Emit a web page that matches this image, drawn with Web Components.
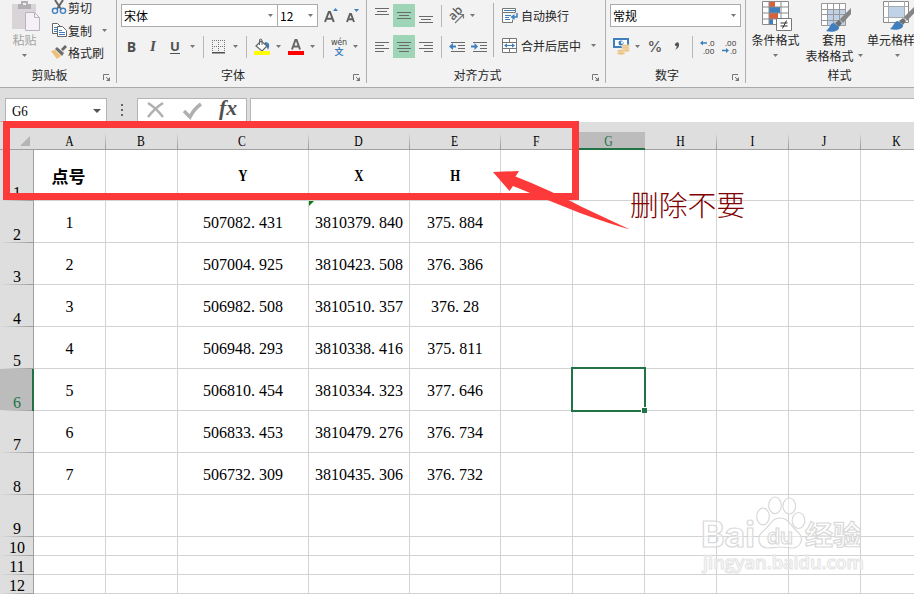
<!DOCTYPE html>
<html lang="zh-CN">
<head>
<meta charset="UTF-8">
<title>G6</title>
<style>
  body {
    margin: 0;
    width: 914px;
    height: 594px;
    overflow: hidden;
    position: relative;
    background: #fff;
    color: #262626;
    font: 12px/16px "Noto Sans CJK SC", sans-serif;
  }
  .ribbon {
    display: flex;
    height: 87px;
    background: #f2f2f2;
    border-bottom: 1px solid #a9a9a9;
    overflow: hidden;
  }
  .side { display: flex; }
  .spacer { width: 1px; height: 54px; margin: 3px 4px 0 3px; background: #b0b0b0; }
  .bold { font: bold 14px "Open Sans", sans-serif; color: #505050; }
  .italic { font: italic bold 15px "Liberation Serif", serif; color: #505050; }
  .under { font: bold 13px/13px "Open Sans", sans-serif; color: #505050; border-bottom: 1px solid #505050; }
  .percent { font: 500 15px "Inter", sans-serif; color: #555; }
</style>
</head>
<body>
  <div class="ribbon">
    <ribbon-group label="剪贴板" style="--w: 117px">
      <div class="side">
        <big-button icon="paste" style="--w: 49px; --c: #a3a3a3; --x: 3px">粘贴</big-button>
        <div>
          <ribbon-row style="--cols: 19px 24px; --h: 15px; --top: 0px"><ui-icon name="cut"></ui-icon><span>剪切</span></ribbon-row>
          <ribbon-row style="--cols: 19px 24px 25px; --h: 23px; --top: 4px"><ui-icon name="copy"></ui-icon><span>复制</span><ui-icon name="down"></ui-icon></ribbon-row>
          <ribbon-row style="--cols: 19px 36px; --h: 23px; --top: -1px"><ui-icon name="brush"></ui-icon><span>格式刷</span></ribbon-row>
        </div>
      </div>
    </ribbon-group>

    <ribbon-group label="字体" style="--w: 250px">
      <ribbon-row style="--cols: 157px 40px 26px 18px; --pad: 4px">
        <combo-box>宋体</combo-box><combo-box style="--bl: 0">12</combo-box>
        <ui-icon name="grow"></ui-icon><ui-icon name="shrink"></ui-icon>
      </ribbon-row>
      <ribbon-row style="--cols: 21px 22px 22px 13px 8px 23px 10px 12px 20px 12px 24px 9px 12px 22px 9px; --pad: 4px; --top: 8px">
        <span class="bold">B</span><span class="italic">I</span><span class="under">U</span><ui-icon name="down"></ui-icon>
        <ui-icon name="sep"></ui-icon>
        <ui-icon name="borders"></ui-icon><ui-icon name="down"></ui-icon>
        <ui-icon name="sep"></ui-icon>
        <ui-icon name="bucket"></ui-icon><ui-icon name="down"></ui-icon>
        <ui-icon name="color"></ui-icon><ui-icon name="down"></ui-icon>
        <ui-icon name="sep"></ui-icon>
        <ui-icon name="wen"></ui-icon><ui-icon name="down"></ui-icon>
      </ribbon-row>
    </ribbon-group>

    <ribbon-group label="对齐方式" style="--w: 239px">
      <div class="side">
        <div style="width: 123px">
          <ribbon-row style="--cols: 22px 22px 22px 8px 23px 8px; --pad: 4px">
            <ui-icon name="vtop"></ui-icon><ui-icon name="vmid" on></ui-icon><ui-icon name="vbot"></ui-icon>
            <ui-icon name="sep"></ui-icon>
            <ui-icon name="angle"></ui-icon><ui-icon name="down"></ui-icon>
          </ribbon-row>
          <ribbon-row style="--cols: 22px 22px 22px 8px 23px 22px; --pad: 4px; --top: 8px">
            <ui-icon name="left"></ui-icon><ui-icon name="center" on></ui-icon><ui-icon name="right"></ui-icon>
            <ui-icon name="sep"></ui-icon>
            <ui-icon name="outdent"></ui-icon><ui-icon name="indent"></ui-icon>
          </ribbon-row>
        </div>
        <div class="spacer"></div>
        <div>
          <ribbon-row style="--cols: 23px 48px"><ui-icon name="wrap"></ui-icon><span>自动换行</span></ribbon-row>
          <ribbon-row style="--cols: 23px 60px 24px; --top: 7px"><ui-icon name="merge"></ui-icon><span>合并后居中</span><ui-icon name="down"></ui-icon></ribbon-row>
        </div>
      </div>
    </ribbon-group>

    <ribbon-group label="数字" style="--w: 140px">
      <ribbon-row style="--cols: 131px; --pad: 4px"><combo-box>常规</combo-box></ribbon-row>
      <ribbon-row style="--cols: 22px 11px 24px 20px 10px 21px 24px; --pad: 4px; --top: 8px">
        <ui-icon name="money"></ui-icon><ui-icon name="down"></ui-icon>
        <span class="percent">%</span><ui-icon name="comma"></ui-icon>
        <ui-icon name="sep"></ui-icon>
        <ui-icon name="more"></ui-icon><ui-icon name="less"></ui-icon>
      </ribbon-row>
    </ribbon-group>

    <ribbon-group label="样式" last style="--w: 188px">
      <div class="side">
        <big-button icon="cond" style="--w: 59px; --x: 2px">条件格式</big-button>
        <big-button icon="table" second="表格格式" style="--w: 58px">套用</big-button>
        <big-button icon="cell" style="--w: 68px">单元格样式</big-button>
      </div>
    </ribbon-group>
  </div>

  <formula-bar>G6</formula-bar>
  <sheet-grid></sheet-grid>
  <site-mark></site-mark>
  <red-note>删除不要</red-note>

<script>
const A = '#6a6a6a';
const BLUE = '#3f7fbd';

// lines(): horizontal strokes used by every alignment icon
const lines = (list) => list.map(([x, y, w]) => `<rect x="${x}" y="${y}" width="${w}" height="1"/>`).join('');

const brushHead = `
  <path d="M31 5 20 16l3 4 8-9z" fill="#858585"/>
  <path d="m19 17-4 3 4 4 3-4z" fill="#707070"/>
  <path d="M14 20c-4 0-4 5-8 8 6 2 14 0 13-4z" fill="${BLUE}"/>`;

const ICONS = {
  down: [5, 3, `<path d="M0 0h5L2.500 3z" fill="#777"/>`],
  sep: [1, 22, `<path d="M0 0h1v22H0z" fill="#b8b8b8"/>`],
  launch: [8, 8, `<path d="M.5 6V.5H6M3 3l3 3" fill="none" stroke="#777"/><path d="M7 3v4H3z" fill="#777"/>`],
  paste: [30, 34, `<path d="M1 4h24v25H1z" fill="#d8d4d8"/><path d="M7 4h3V1h7v3h3v5H7z" fill="#b1afb1"/><path d="M12 3h3v2h-3z" fill="#eee"/><path d="M14.500 12.500h9l5 5v13h-14z" fill="#f5f0f7" stroke="#b9b3bb"/><path d="M23.500 12.500v5h5" fill="none" stroke="#b9b3bb"/>`],
  cut: [16, 16, `<path d="m4 0 6 9M12 0 6 9" stroke="#666" stroke-width="2" fill="none"/><circle cx="4" cy="10.800" r="2.600" fill="none" stroke="${BLUE}" stroke-width="1.400"/><circle cx="12" cy="10.800" r="2.600" fill="none" stroke="${BLUE}" stroke-width="1.400"/>`],
  copy: [16, 15, `<path d="M1.500.5h5l3 3v7h-8z" fill="#fff" stroke="#666"/><path d="M3 4.500h3M3 6.500h3M3 8.500h3" stroke="${BLUE}"/><path d="M6.500 3.500h5l4 4v6h-9z" fill="#fff" stroke="#666"/><path d="M8 7.500h3M8 9.500h6M8 11.500h6" stroke="${BLUE}"/>`],
  brush: [16, 15, `<path d="m14 0 2 2-4 4-2-2z" fill="#666"/><path d="m6 2 7 6-2 3-7-7z" fill="#6d6d6d"/><path d="M4 5 0 6l6 8 4-3z" fill="#eebf76"/>`],
  grow: [14, 15, `<path d="M1 14 4.800 4h1.200L9.800 14M2.500 10.800h6" fill="none" stroke="#606060" stroke-width="2"/><path d="m9 3 2.500-3L14 3z" fill="${BLUE}"/>`],
  shrink: [14, 15, `<path d="M1 14 4 6h1l3 8M2 11.300h5" fill="none" stroke="#606060" stroke-width="1.900"/><path d="M8 1h5l-2.500 3z" fill="${BLUE}"/>`],
  borders: [13, 14, `<path d="M.5 0v13M6.500 0v13M12.500 0v13M0 .5h13M0 6.500h13" stroke="#777" stroke-dasharray="1 1" fill="none"/><path d="M0 12h13v1.500H0z" fill="#505050"/>`],
  bucket: [17, 17, `<path d="M11 4c5 0 5 4 3 8-1-3-2-4-4-5z" fill="${BLUE}"/><path d="m7 3 6 5-5 5-6-5z" fill="#fff" stroke="#666" stroke-width="1.200"/><path d="M5.500 7V1.500Q7 0 8 2v5" fill="none" stroke="#666"/><path d="M0 13h16v4H0z" fill="#ff0"/>`],
  color: [16, 16, `<path d="M4 10.500 7.400 1h1.200L12 10.500M5.200 7.500h5.600" fill="none" stroke="#666" stroke-width="2"/><path d="M0 12h16v4H0z" fill="red"/>`],
  wen: [18, 18, `<text x="0" y="7" font-family="DejaVu Sans" font-size="8" textLength="16" fill="#444">wén</text><text x="3.500" y="17" font-size="9" font-weight="bold" font-family="Noto Sans CJK SC" fill="${BLUE}">文</text>`],
  vtop: [14, 22, `<g fill="${A}">${lines([[0, 3, 14], [2, 6, 10], [0, 9, 14]])}</g>`],
  vmid: [14, 22, `<g fill="${A}">${lines([[0, 7, 14], [2, 10, 10], [0, 13, 14]])}</g>`],
  vbot: [14, 22, `<g fill="${A}">${lines([[0, 11, 14], [2, 14, 10], [0, 17, 14]])}</g>`],
  left: [14, 12, `<g fill="${A}">${lines([[0, 1, 14], [0, 4, 9], [0, 7, 14], [0, 10, 9]])}</g>`],
  center: [14, 12, `<g fill="${A}">${lines([[0, 1, 14], [2, 4, 10], [0, 7, 14], [2, 10, 10]])}</g>`],
  right: [14, 12, `<g fill="${A}">${lines([[0, 1, 14], [5, 4, 9], [0, 7, 14], [5, 10, 9]])}</g>`],
  angle: [17, 16, `<text transform="translate(5 13) rotate(-45)" font-family="Open Sans" font-weight="600" font-size="12" fill="#606060">ab</text><path d="m7 15 8-8M11.500 6.500h4v4" fill="none" stroke="#777" stroke-width="1.200"/>`],
  outdent: [16, 12, `<g fill="${A}">${lines([[2, 1, 14], [9, 4, 7], [9, 7, 7], [2, 10, 14]])}</g><path d="M0 5.500 4 2v2.500h3v2H4V9z" fill="${BLUE}"/>`],
  indent: [16, 12, `<g fill="${A}">${lines([[2, 1, 14], [9, 4, 7], [9, 7, 7], [2, 10, 14]])}</g><path d="M7 5.500 3.500 2v2.500H0v2h3.500V9z" fill="${BLUE}"/>`],
  wrap: [15, 16, `<path d="M.5.5h13v4H.5zM.5 4.500v10h10v-3" fill="#fff" stroke="#777"/><path d="M2 2.500h12M3 7.500h6M3 9.500h4M3 11.500h5" stroke="${BLUE}"/><path d="M15 5v4h-4" fill="none" stroke="${BLUE}" stroke-width="1.500"/><path d="m8.500 9 4-3v6z" fill="${BLUE}"/>`],
  merge: [15, 15, `<path d="M.5.5h14v14H.5zM.5 4.500h14M.5 10.500h14M7.500.5v4M7.500 10.500v4" fill="#fff" stroke="#777"/><path d="M3 7.500h9" stroke="${BLUE}"/><path d="m2 7.500 3-2.300v4.600zM13 7.500l-3-2.300v4.600z" fill="${BLUE}"/>`],
  money: [17, 17, `<path d="M1 1h14v8H1z" fill="#fff" stroke="${BLUE}" stroke-width="2"/><circle cx="8" cy="5" r="2.500" fill="${BLUE}"/><path d="M8 3.500h2v2H8z" fill="#fff"/><g fill="#ecc27d" stroke="#f2f2f2" stroke-width=".5"><ellipse cx="12.500" cy="8" rx="4" ry="1.600"/><ellipse cx="12.500" cy="10.300" rx="4" ry="1.600"/><ellipse cx="12.500" cy="12.400" rx="4" ry="1.600"/><ellipse cx="8" cy="13" rx="4" ry="1.600"/><ellipse cx="8" cy="15.300" rx="4" ry="1.600"/></g>`],
  comma: [6, 9, `<path d="M1 2Q3-1 5 1.500C5.500 5 3.500 7 1 7.500 2.500 6 3 5 2.500 4 1 4 .5 3 1 2z" fill="#555"/>`],
  more: [16, 16, `<text x="8" y="6.500" font-family="Open Sans" font-size="8" fill="#333">.0</text><text x="3" y="14.500" font-family="Open Sans" font-size="8" fill="#333">.00</text><path d="m0 4 3-2.500V3.300h4v1.400H3V6.500z" fill="${BLUE}"/>`],
  less: [16, 16, `<text x="3" y="6.500" font-family="Open Sans" font-size="8" fill="#333">.00</text><text x="8" y="14.500" font-family="Open Sans" font-size="8" fill="#333">.0</text><path d="M7 11.500 4 9v1.800H0v1.400h4V14z" fill="${BLUE}"/>`],
  cond: [31, 31, `<path d="M1 1h27v24H1z" fill="#fff"/><path d="M8 1h6v6H8zM8 13h9v6H8z" fill="#d9603b"/><path d="M8 7h11v6H8zM8 19h4v6H8z" fill="${BLUE}"/><path d="M1.500 1.500h26v23h-26zM8 1v24M20 1v24M1 7h27M1 13h27M1 19h27" fill="none" stroke="#8a8a8a"/><path d="M15.500 18.500h15v12h-15z" fill="#fff" stroke="#777"/><path d="M19.500 23h7M19.500 26h7M25.500 20.500l-4 8" stroke="#333"/>`],
  table: [31, 31, `<path d="M2.500 3.500h24v22h-24z" fill="#fff"/><path d="M9 9h18v17H9z" fill="#bfd2e8"/><path d="M2.500 3.500h24v22h-24zM8.500 3v22M14.500 3v22M20.500 3v22M2 9.500h24M2 14.500h24M2 20.500h24" fill="none" stroke="#999"/><g transform="translate(1 3)">${brushHead}</g>`],
  cell: [31, 31, `<path d="M1.500 1.500h25v21h-25z" fill="#fff" stroke="#8a8a8a"/><path d="M6.500 1v21M22.500 1v21M1 6.500h25M1 17.500h25" stroke="#aaa"/><path d="M7 7h15v10H7z" fill="#bfd2e8"/><g transform="translate(2 1)">${brushHead}</g>`],
};

class UiIcon extends HTMLElement {
  connectedCallback() {
    const [w, h, body] = ICONS[this.getAttribute('name')];
    this.attachShadow({ mode: 'open' }).innerHTML = `
      <style>
        :host { display: flex; align-items: center; justify-content: center; }
        :host([on]) { background: #9fd5b7; align-self: stretch; justify-self: stretch; }
        svg { display: block; flex: none; overflow: visible; }
      </style>
      <svg width="${w}" height="${h}" viewBox="0 0 ${w} ${h}">${body}</svg>`;
  }
}
customElements.define('ui-icon', UiIcon);

class RibbonGroup extends HTMLElement {
  connectedCallback() {
    const last = this.hasAttribute('last');
    this.attachShadow({ mode: 'open' }).innerHTML = `
      <style>
        :host { display: flex; flex-direction: column; flex: none; box-sizing: border-box; width: var(--w); height: 83px; border-right: 1px solid #b0b0b0; }
        .tools { height: 68px; }
        .label { display: grid; grid-template-columns: 1fr 14px; padding-right: 3px; text-align: center; line-height: 17px; }
        .label.last { grid-template-columns: 1fr; padding-right: 0; }
        ui-icon { align-self: end; padding: 0 0 1px 2px; }
      </style>
      <div class="tools"><slot></slot></div>
      <div class="label${last ? ' last' : ''}"><span>${this.getAttribute('label')}</span>${last ? '' : '<ui-icon name="launch"></ui-icon>'}</div>`;
  }
}
customElements.define('ribbon-group', RibbonGroup);

class RibbonRow extends HTMLElement {
  constructor() {
    super();
    this.attachShadow({ mode: 'open' }).innerHTML = `
      <style>
        :host {
          display: grid;
          grid-template-columns: var(--cols);
          grid-template-rows: var(--h, 23px);
          place-items: center;
          padding-left: var(--pad, 0);
          margin-top: var(--top, 4px);
          white-space: nowrap;
        }
      </style>
      <slot></slot>`;
  }
}
customElements.define('ribbon-row', RibbonRow);

class ComboBox extends HTMLElement {
  constructor() {
    super();
    this.attachShadow({ mode: 'open' }).innerHTML = `
      <style>
        :host { display: flex; justify-self: stretch; align-self: stretch; align-items: center; justify-content: space-between; padding: 0 4px 0 2px; background: #fff; border: 1px solid #ababab; border-left-width: var(--bl, 1px); color: #000; }
      </style>
      <slot></slot><ui-icon name="down"></ui-icon>`;
  }
}
customElements.define('combo-box', ComboBox);

class BigButton extends HTMLElement {
  connectedCallback() {
    const second = this.getAttribute('second') || '';
    this.attachShadow({ mode: 'open' }).innerHTML = `
      <style>
        :host { display: flex; flex-direction: column; align-items: center; flex: none; width: var(--w); color: var(--c, inherit); white-space: nowrap; }
        .pic { height: 32px; align-items: flex-start; margin-left: var(--x, 0); }
        .second { display: flex; gap: 4px; height: 15px; line-height: 15px; }
      </style>
      <ui-icon class="pic" name="${this.getAttribute('icon')}"></ui-icon>
      <slot></slot>
      <div class="second">${second}<ui-icon name="down"></ui-icon></div>`;
  }
}
customElements.define('big-button', BigButton);

class FormulaBar extends HTMLElement {
  constructor() {
    super();
    this.attachShadow({ mode: 'open' }).innerHTML = `
      <style>
        :host { display: grid; grid-template-columns: 102px 30px 110px 1fr; box-sizing: border-box; height: 34px; padding: 10px 0 0 5px; background: #dedede; border-bottom: 1px solid #b5b5b5; }
        .box { background: #fff; border: 1px solid #b5b5b5; border-bottom: 0; display: flex; align-items: center; }
        .name { justify-content: space-between; padding: 0 5px 0 6px; color: #000; font: 14px "Liberation Serif", serif; }
        .name span { transform: scaleX(.92); transform-origin: left; padding-top: 3px; }
        .dots { display: grid; place-content: center; gap: 3px; }
        .dots i { width: 2px; height: 2px; background: #666; }
        .input { margin-left: 3px; border-right: 0; }
        svg { overflow: visible; }
      </style>
      <div class="box name"><span><slot></slot></span><svg width="8" height="4"><path d="M0 0h8L4 4z" fill="#555"/></svg></div>
      <div class="dots"><i></i><i></i><i></i></div>
      <div class="box">
        <svg width="108" height="23">
          <path d="M10 4q8 5 15 14M25 4q-8 5-15 14" fill="none" stroke="#b0b0b0" stroke-width="2.600"/>
          <path d="m46 12 6 6Q56 10 63 5" fill="none" stroke="#b0b0b0" stroke-width="3.500"/>
          <text x="81" y="16" font-family="Liberation Serif" font-style="italic" font-weight="bold" font-size="20" fill="#505050" textLength="18" lengthAdjust="spacingAndGlyphs">fx</text>
        </svg>
      </div>
      <div class="box input"></div>`;
  }
}
customElements.define('formula-bar', FormulaBar);

const COLS = { A: 72, B: 72, C: 131, D: 101, E: 91, F: 72, G: 72, H: 72, I: 72, J: 72, K: 72 };
const ROWS = [51, 42, 42, 42, 42, 42, 42, 42, 42, 19, 19, 19];
const DATA = [
  ['点号', '', 'Y', 'X', 'H'],
  ['1', '', '507082.431', '3810379.840', '375.884'],
  ['2', '', '507004.925', '3810423.508', '376.386'],
  ['3', '', '506982.508', '3810510.357', '376.28'],
  ['4', '', '506948.293', '3810338.416', '375.811'],
  ['5', '', '506810.454', '3810334.323', '377.646'],
  ['6', '', '506833.453', '3810479.276', '376.734'],
  ['7', '', '506732.309', '3810435.306', '376.732'],
];

class SheetGrid extends HTMLElement {
  constructor() {
    super();
    const names = Object.keys(COLS);
    const head = names.map((n) => `<div class="col${n === 'G' ? ' sel' : ''}"><span>${n}</span></div>`).join('');
    const rows = ROWS.map((h, r) => {
      const cells = names.map((n, c) => {
        const text = (DATA[r] && DATA[r][c]) || '';
        // the point takes a full half-width cell like the digits do
        const body = text.replace('.', '<i>.</i>');
        const extra = n === 'D' && r === 1 ? '<b class="flag"></b>' : n === 'G' && r === 5 ? '<b class="cursor"></b>' : '';
        const cls = r === 0 && c > 0 ? 'cell title' : r === 0 ? 'cell cjk' : 'cell';
        return `<div class="${cls}"><span>${body}</span>${extra}</div>`;
      }).join('');
      return `<div class="num${r === 5 ? ' sel' : ''}"><span>${r + 1}</span></div>${cells}`;
    }).join('');
    this.attachShadow({ mode: 'open' }).innerHTML = `
      <style>
        :host {
          display: grid;
          grid-template-columns: 34px ${Object.values(COLS).map((w) => w + 'px').join(' ')};
          grid-template-rows: 28px ${ROWS.map((h) => h + 'px').join(' ')};
          width: 914px;
          color: #000;
          font: 16px/18px "Liberation Serif", "Noto Sans CJK SC", serif;
        }
        div { box-sizing: border-box; display: flex; justify-content: center; }
        .corner { background: #dedede; border-bottom: 1px solid #a0a0a0; justify-content: flex-end; align-items: flex-end; padding: 0 4px 3px 0; }
        .col {
          background: linear-gradient(#dedede, #999) right bottom / 1px 17px no-repeat #dedede;
          border-bottom: 1px solid #a0a0a0;
          align-items: flex-end;
          padding-right: 2px;
        }
        .col span { transform: scaleX(.78); font-size: 15px; line-height: 15px; }
        .col.sel { background: linear-gradient(#bcbcbc, #bcbcbc) 0 bottom / 100% 16px no-repeat #dedede; border-bottom: 2px solid #217346; color: #217346; }
        .col.sel span { margin-bottom: -1px; }
        .num {
          background: linear-gradient(90deg, #dedede, #999) 0 bottom / 100% 1px no-repeat #dedede;
          box-shadow: inset -1px 0 #a0a0a0;
          align-items: flex-end;
          overflow: hidden;
        }
        .num span { line-height: 16px; }
        .num.sel { background-color: #bcbcbc; box-shadow: inset -2px 0 #217346; color: #217346; }
        .cell { position: relative; border: solid #d3d3d3; border-width: 0 1px 1px 0; align-items: center; padding: 2px 0 0; }
        .title { font-weight: bold; }
        .title span { transform: scaleX(.8); font-size: 16px; }
        .cjk { font: bold 17px "Noto Sans CJK SC", sans-serif; padding: 0 2px 0 0; }
        i { font-style: normal; padding-right: 4px; }
        .flag { position: absolute; left: 0; top: 0; border: solid transparent; border-width: 0 5px 5px 0; border-top: 5px solid #0a7a0a; border-bottom: 0; }
        .cursor { position: absolute; left: -2px; top: -2px; width: 71px; height: 41px; border: 2px solid #217346; z-index: 1; }
        .cursor::after { content: ""; position: absolute; right: -3px; bottom: -3px; width: 5px; height: 5px; background: #217346; border: solid #fff; border-width: 1px 0 0 1px; }
      </style>
      <div class="corner"><svg width="10" height="10"><path d="M10 0v10H0z" fill="#b4b4b4"/></svg></div>${head}${rows}`;
  }
}
customElements.define('sheet-grid', SheetGrid);

class RedNote extends HTMLElement {
  constructor() {
    super();
    this.attachShadow({ mode: 'open' }).innerHTML = `
      <style>
        :host { position: absolute; left: 0; top: 0; z-index: 3; }
        .frame { position: absolute; left: 3px; top: 121px; width: 562px; height: 65px; border: 7px solid #fd3939; }
        svg { position: absolute; left: 490px; top: 166px; }
        .text { position: absolute; left: 630px; top: 184px; font-size: 28.800px; line-height: 40px; font-weight: 300; white-space: nowrap; color: #800000; }
      </style>
      <div class="frame"></div>
      <svg width="145" height="68"><path d="M3 6l26-1-3.500 5.500Q60 24 92 41l48 22.500Q120 58 90 47 50 31 23 20l-3.500 5z" fill="#fd3939"/></svg>
      <div class="text"><slot></slot></div>`;
  }
}
customElements.define('red-note', RedNote);

class SiteMark extends HTMLElement {
  constructor() {
    super();
    this.attachShadow({ mode: 'open' }).innerHTML = `
      <style>
        :host { position: absolute; left: 696px; top: 490px; z-index: 2; }
        svg { display: block; }
        g { fill: #fff; fill-opacity: .45; stroke: #d9d9d9; stroke-width: 1.200; }
        text { font-family: "Noto Sans CJK SC", sans-serif; font-weight: bold; }
      </style>
      <svg width="180" height="96">
        <g>
          <text x="5" y="57" font-size="35" style="font-family: Inter, sans-serif" textLength="54" lengthAdjust="spacingAndGlyphs">Bai</text>
          <ellipse cx="67" cy="26.500" rx="6.300" ry="8.300"/>
          <ellipse cx="79" cy="15.300" rx="6.300" ry="8.300"/>
          <ellipse cx="93.300" cy="16" rx="6.300" ry="8"/>
          <ellipse cx="102.500" cy="30.500" rx="6.300" ry="8"/>
          <path d="M84 28c9 0 11 9 18 14 7 7 2 16-6 16-5 0-7-1-12-1s-8 1-12 1c-9 0-12-10-6-16 8-5 9-14 18-14z"/>
          <text x="71" y="54" font-size="22" style="font-family: Inter, sans-serif; font-weight: 600" textLength="26" lengthAdjust="spacingAndGlyphs">du</text>
          <text x="109" y="55" font-size="27" textLength="56" lengthAdjust="spacingAndGlyphs">经验</text>
          <text x="7" y="79" font-size="18" style="font-family: 'Open Sans', sans-serif; font-weight: 600; stroke: #e6e6e6" textLength="161" lengthAdjust="spacingAndGlyphs">jingyan.baidu.com</text>
        </g>
      </svg>`;
  }
}
customElements.define('site-mark', SiteMark);
</script>
</body>
</html>
